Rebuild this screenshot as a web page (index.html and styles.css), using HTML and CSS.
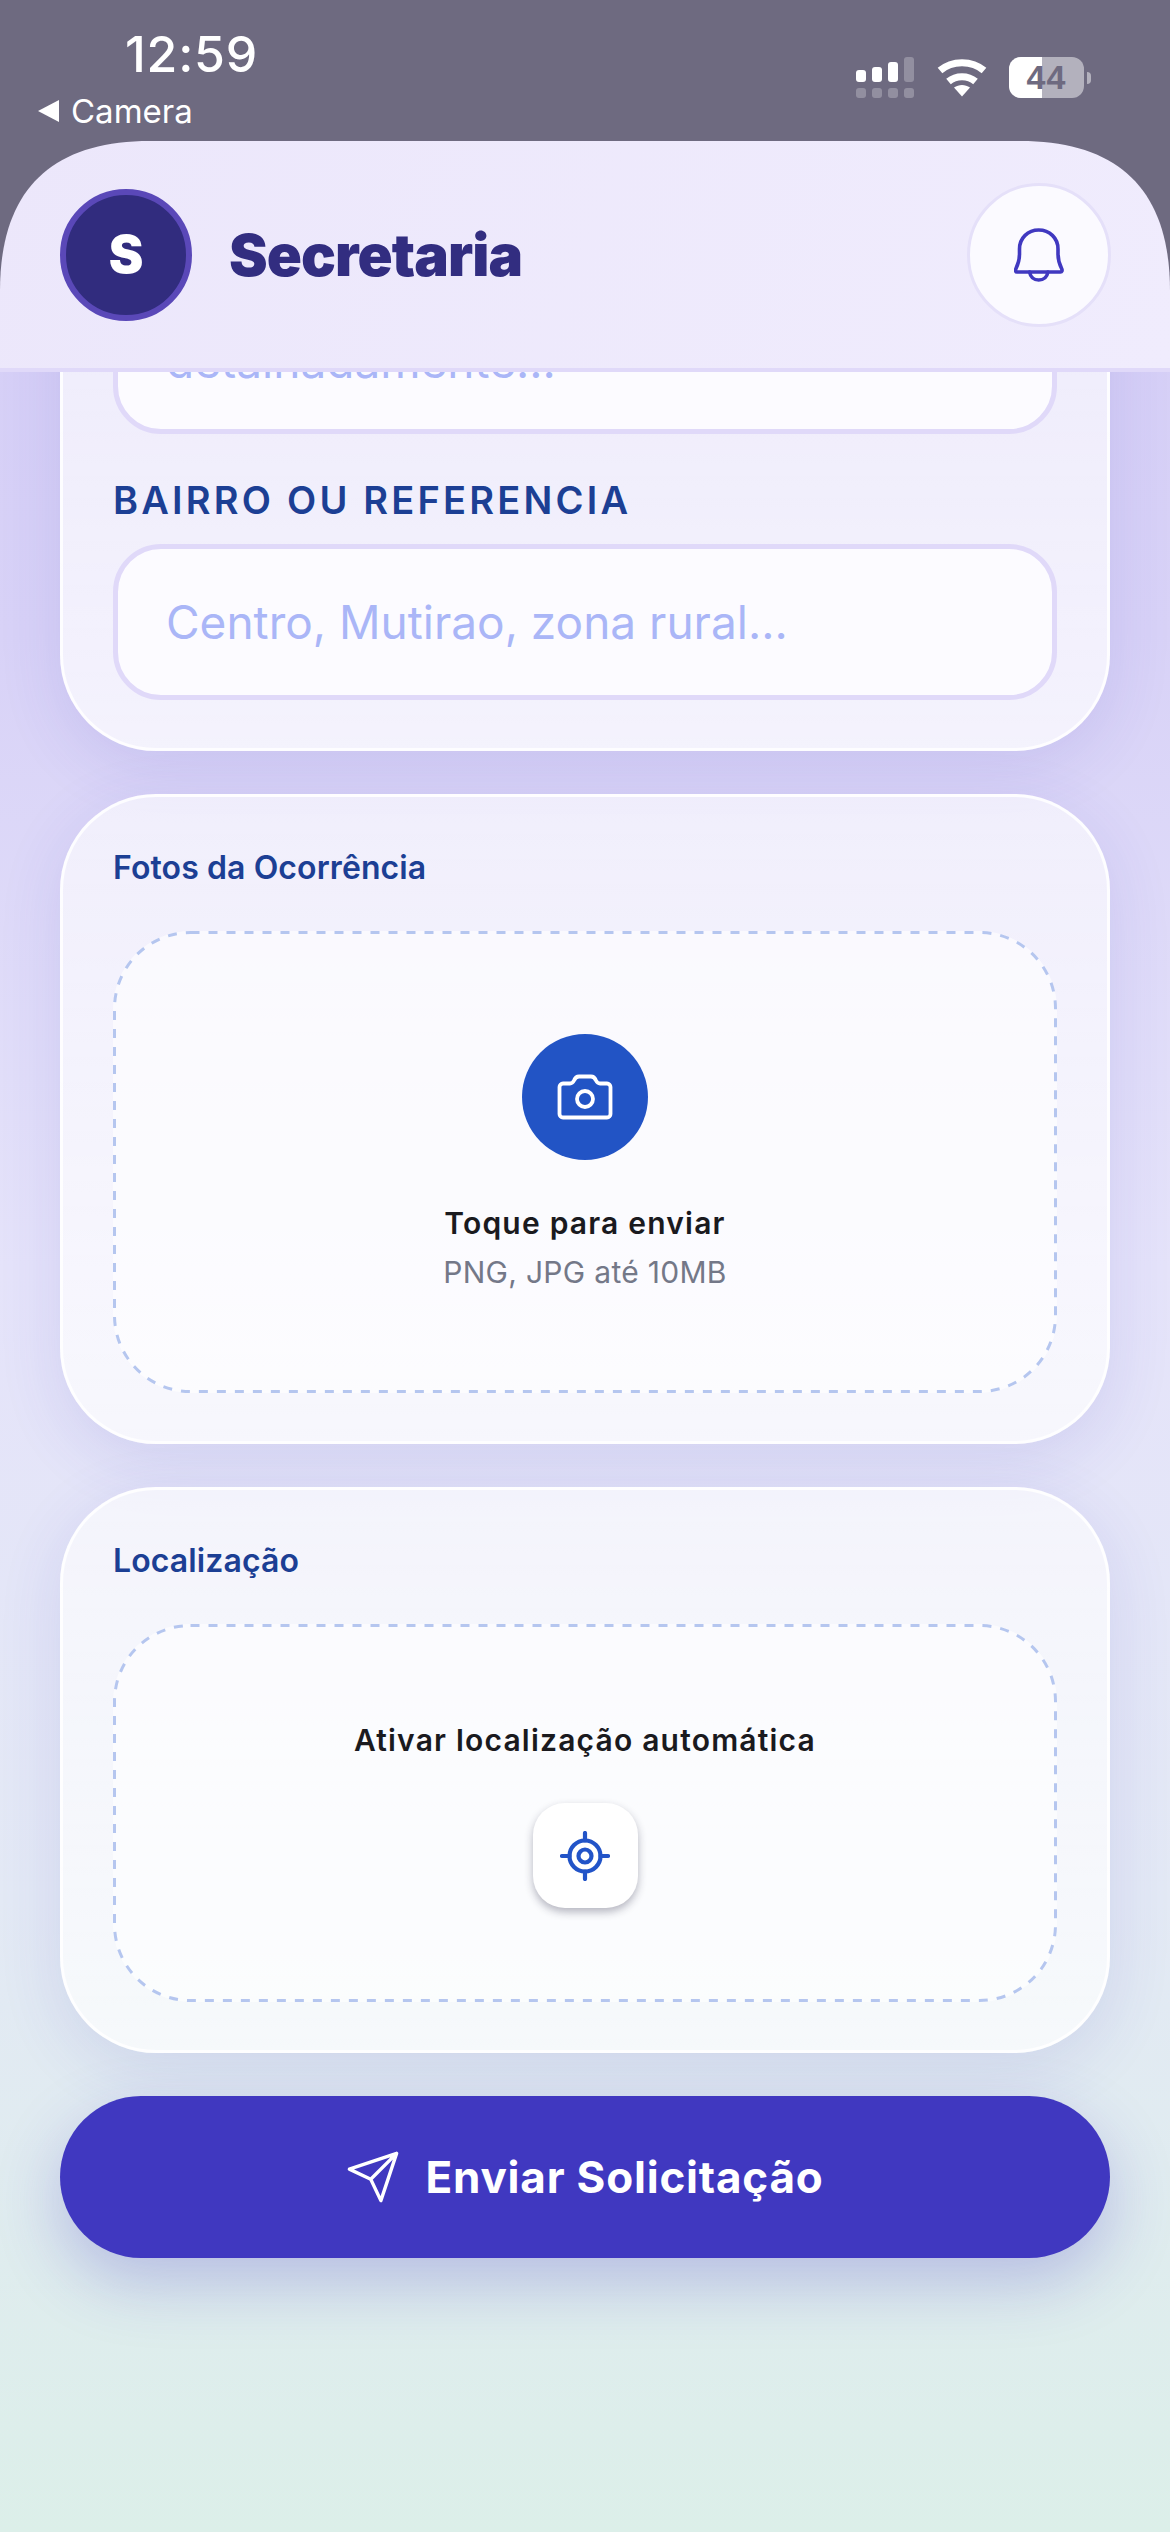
FILE: index.html
```html
<!DOCTYPE html>
<html lang="pt-BR">
<head>
<meta charset="utf-8">
<title>Secretaria</title>
<link rel="stylesheet" href="styles.css">
</head>
<body>
<div class="top">
  <div class="status">
    <div class="status-left">
      <div class="time">12:59</div>
      <div class="back"><span class="back-arrow"></span><span>Camera</span></div>
    </div>
    <div class="status-right">
      <svg class="signal" width="58" height="41" viewBox="0 0 58 41" fill="#fff">
        <rect x="0" y="13" width="10" height="12" rx="3"/><rect x="16" y="10" width="10" height="15" rx="3"/><rect x="32" y="5" width="10" height="20" rx="3"/>
        <rect x="48" y="0" width="10" height="25" rx="3" opacity=".25"/>
        <g opacity=".25"><rect x="0" y="31" width="10" height="10" rx="3"/><rect x="16" y="31" width="10" height="10" rx="3"/><rect x="32" y="31" width="10" height="10" rx="3"/><rect x="48" y="31" width="10" height="10" rx="3"/></g>
      </svg>
      <svg class="wifi" width="50" height="38" viewBox="0 0 50 38" fill="none" stroke="#fff" stroke-width="7">
        <path d="M3 11.500C15 1 35 1 47 11.500"/>
        <path d="M11.500 22.500C19 16 31 16 38.500 22.500"/>
        <path d="M17 28.500C22 25 28 25 33 28.500L25 37.500Z" fill="#fff" stroke="none"/>
      </svg>
      <div class="battery"><div class="battery-fill"></div><span class="battery-text">44</span></div>
      <div class="battery-nub"></div>
    </div>
  </div>
  <header class="app-header">
    <div class="avatar">S</div>
    <h1 class="title">Secretaria</h1>
    <div class="bell-btn">
      <svg width="50" height="54" viewBox="0 0 50 54" fill="none" stroke="#4038c0" stroke-width="3.600" stroke-linejoin="round" stroke-linecap="round">
        <path d="M3 44C1.500 44 1.200 42.500 1.800 41C4 36.500 5.500 32 5.500 26V21C5.500 10 14 2 24.700 2C35.500 2 44 10 44 21V26C44 32 45.500 36.500 47.800 41C48.400 42.500 48 44 46.500 44Z"/>
        <path d="M15.500 44C16.500 49 20 52 24.700 52C29.500 52 33 49 34 44"/>
      </svg>
    </div>
  </header>
</div>
<main class="content">
  <section class="card card-form">
    <div class="input textarea">detalhadamente...</div>
    <label class="field-label">BAIRRO OU REFERENCIA</label>
    <div class="input">Centro, Mutirao, zona rural...</div>
  </section>
  <section class="card">
    <h2 class="card-title">Fotos da Ocorrência</h2>
    <div class="dropzone photos">
      <svg class="dash" aria-hidden="true"><rect class="dash-rect"/></svg>
      <div class="camera-circle">
        <svg width="56" height="46" viewBox="0 0 56 46" fill="none" stroke="#fff" stroke-width="3.800" stroke-linejoin="round">
          <path d="M6 9.500H13C15 9.500 16 8.500 17 6.500C18 4 19.500 2.500 22 2.500H34C36.500 2.500 38 4 39 6.500C40 8.500 41 9.500 43 9.500H50C52 9.500 53.500 11 53.500 13V40C53.500 42 52 43.500 50 43.500H6C4 43.500 2.500 42 2.500 40V13C2.500 11 4 9.500 6 9.500Z"/>
          <circle cx="28" cy="25" r="8"/>
        </svg>
      </div>
      <div class="drop-title">Toque para enviar</div>
      <div class="drop-sub">PNG, JPG até 10MB</div>
    </div>
  </section>
  <section class="card">
    <h2 class="card-title">Localização</h2>
    <div class="dropzone location">
      <svg class="dash" aria-hidden="true"><rect class="dash-rect"/></svg>
      <div class="drop-title">Ativar localização automática</div>
      <div class="locate-tile">
        <svg width="50" height="50" viewBox="0 0 50 50" fill="none" stroke="#2254c8" stroke-width="4.200" stroke-linecap="round">
          <circle cx="25" cy="25" r="15.500"/>
          <circle cx="25" cy="25" r="6.500"/>
          <path d="M25 2V9.500M25 40.500V48M2 25H9.500M40.500 25H48"/>
        </svg>
      </div>
    </div>
  </section>
  <button class="submit">
    <svg width="54" height="54" viewBox="0 0 24 24" fill="none" stroke="#fff" stroke-width="1.500" stroke-linejoin="round" stroke-linecap="round">
      <path d="M22.500 1.500L11 13M22.500 1.500L15.500 22.500L11 13L1.500 8.500Z"/>
    </svg>
    <span>Enviar Solicitação</span>
  </button>
</main>
</body>
</html>
```

FILE: styles.css
```css
* { box-sizing: border-box; }
html, body { margin: 0; padding: 0; }
body {
  width: 1170px;
  height: 2532px;
  overflow: hidden;
  font-family: Inter, "Liberation Sans", sans-serif;
  background: linear-gradient(180deg, #d3ccf6 0%, #d8d2f7 25%, #e5e3fa 50%, #e3e9f5 75%, #dcefe9 100%);
  display: flex;
  flex-direction: column;
}
.top { background: #6e6a80; flex: none; }
.status {
  height: 141px;
  display: flex;
  justify-content: space-between;
  color: #fff;
}
.status-left { padding-left: 38px; }
.time {
  font-size: 50px;
  font-weight: 500;
  line-height: 56px;
  letter-spacing: .8px;
  margin: 26px 0 0 87px;
}
.back {
  display: flex;
  align-items: center;
  gap: 12px;
  font-size: 33px;
  line-height: 40px;
  margin-top: 9px;
}
.back-arrow {
  width: 0;
  height: 0;
  border-top: 11px solid transparent;
  border-bottom: 11px solid transparent;
  border-right: 21px solid #fff;
}
.status-right {
  display: flex;
  align-items: flex-start;
  padding: 57px 79px 0 0;
}
.signal { margin-right: 23px; }
.wifi { margin: 2px 22px 0 0; }
.battery {
  position: relative;
  width: 75px;
  height: 41px;
  border-radius: 12px;
  background: rgba(255, 255, 255, .48);
  overflow: hidden;
  display: flex;
  align-items: center;
  justify-content: center;
}
.battery-fill {
  position: absolute;
  left: 0;
  top: 0;
  bottom: 0;
  width: 33px;
  background: #fff;
}
.battery-text {
  position: relative;
  color: #6e6a80;
  font-family: "Liberation Sans", sans-serif;
  font-size: 34px;
  font-weight: 700;
  letter-spacing: 1px;
}
.battery-nub {
  width: 4px;
  height: 12px;
  margin: 15px 0 0 3px;
  background: rgba(255, 255, 255, .48);
  border-radius: 0 4px 4px 0;
}
.app-header {
  height: 231px;
  background: linear-gradient(115deg, #ece7fb 0%, #f0ecfd 100%);
  border-bottom: 4px solid #e0d9f9;
  clip-path: path("M0 231V150C0 50 50 0 150 0H1020C1120 0 1170 50 1170 150V231Z");
  display: flex;
  align-items: center;
  padding: 0 60px;
  position: relative;
  z-index: 2;
}
.avatar {
  width: 132px;
  height: 132px;
  border-radius: 50%;
  background: #312c7e;
  border: 6px solid #5a48b8;
  color: #fff;
  font-size: 52px;
  font-weight: 900;
  display: flex;
  align-items: center;
  justify-content: center;
}
.title {
  margin: 0 0 0 37px;
  font-size: 58px;
  font-weight: 900;
  letter-spacing: -.9px;
  color: #322d80;
  flex: 1;
}
.bell-btn {
  width: 144px;
  height: 144px;
  margin-right: -1px;
  border-radius: 50%;
  background: #fbfaff;
  border: 3px solid #e5e0f9;
  display: flex;
  align-items: center;
  justify-content: center;
}
.content {
  flex: 1;
  min-height: 0;
  overflow: hidden;
  padding: 0 60px;
  display: flex;
  flex-direction: column;
  gap: 43px;
}
.card {
  flex: none;
  border-radius: 96px;
  border: 3px solid rgba(255, 255, 255, .85);
  background: linear-gradient(180deg, rgba(255, 255, 255, .6), rgba(255, 255, 255, .7));
  box-shadow: 0 16px 64px rgba(64, 56, 192, .12);
  padding: 49px 50px 48px;
}
.card-form { margin-top: -193px; padding-top: 0; }
.input {
  height: 156px;
  border-radius: 48px;
  border: 5px solid #e0d9f9;
  background: #fcfbff;
  color: #aab6f7;
  font-size: 46px;
  line-height: 60px;
  padding: 43px 48px;
}
.textarea { height: 252px; padding-top: 144px; }
.field-label {
  display: block;
  margin: 44px 0 22px;
  font-size: 38px;
  line-height: 44px;
  font-weight: 600;
  letter-spacing: 3.200px;
  color: #1c3f94;
}
.card-title {
  margin: 0 0 41px;
  font-size: 32px;
  line-height: 44px;
  font-weight: 600;
  letter-spacing: .1px;
  color: #1c3f94;
}
.dropzone {
  position: relative;
  border-radius: 78px;
  background: rgba(255, 255, 255, .6);
  display: flex;
  flex-direction: column;
  align-items: center;
}
.dash {
  position: absolute;
  left: 0;
  top: 0;
  width: 100%;
  height: 100%;
}
.dash-rect {
  x: 1.500px;
  y: 1.500px;
  width: calc(100% - 3px);
  height: calc(100% - 3px);
  rx: 76px;
  ry: 76px;
  fill: none;
  stroke: #b5c6ef;
  stroke-width: 3px;
  stroke-dasharray: 9 9;
}
.photos { height: 462px; padding-top: 103px; }
.location { height: 378px; padding-top: 96px; }
.camera-circle {
  width: 126px;
  height: 126px;
  border-radius: 50%;
  background: #2254c5;
  display: flex;
  align-items: center;
  justify-content: center;
  margin-bottom: 43px;
}
.drop-title {
  font-size: 30px;
  line-height: 40px;
  font-weight: 600;
  letter-spacing: 1.200px;
  color: #1a1a1e;
}
.drop-sub {
  margin-top: 9px;
  font-size: 30px;
  line-height: 40px;
  letter-spacing: .3px;
  color: #747888;
}
.locate-tile {
  width: 105px;
  height: 105px;
  margin-top: 43px;
  border-radius: 32px;
  background: #fff;
  box-shadow: 0 4px 8px rgba(30, 30, 60, .32);
  display: flex;
  align-items: center;
  justify-content: center;
}
.submit {
  flex: none;
  height: 162px;
  border: 0;
  border-radius: 81px;
  background: #4038c0;
  box-shadow: 0 24px 64px rgba(64, 56, 192, .26);
  color: #fff;
  font-family: inherit;
  font-size: 44px;
  font-weight: 700;
  letter-spacing: .8px;
  display: flex;
  align-items: center;
  justify-content: center;
  gap: 25px;
}
```
